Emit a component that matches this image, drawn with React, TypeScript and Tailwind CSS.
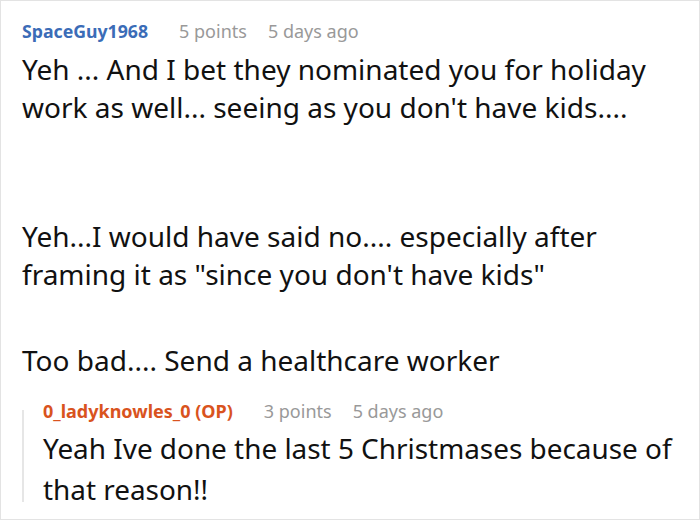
export default function App() {
    return (
        <div className="w-[700px] h-[520px] bg-white border border-[#e3e3e3] overflow-hidden" style={{ fontFamily: '"Noto Sans", sans-serif' }}>
            <div className="pl-[21px] pt-[17px]">
                <div className="flex items-center text-[18px] leading-[26px]">
                    <span className="font-bold text-[#3b6cb7] text-[17.7px]">SpaceGuy1968</span>
                    <span className="ml-[31px] text-[#999999]">5 points</span>
                    <span className="ml-[21px] text-[#999999]">5 days ago</span>
                </div>
                <div className="text-[28px] leading-[38px] text-[#111111] mt-[6px]">
                    <p>Yeh ... And I bet they nominated you for holiday<br />work as well... seeing as you don't have kids....</p>
                    <p className="mt-[91px]">Yeh...I would have said no.... especially after<br />framing it as "since you don't have kids"</p>
                    <p className="mt-[48px]">Too bad.... Send a healthcare worker</p>
                </div>
                <div className="mt-[19px] flex">
                    <div className="w-[2px] bg-[#e6e6e6] mt-[12px] mb-[8px]" />
                    <div className="pl-[19px]">
                        <div className="flex items-center text-[18px] leading-[26px]">
                            <span className="font-bold text-[#d9531e]">0_ladyknowles_0 (OP)</span>
                            <span className="ml-[31px] text-[#999999]">3 points</span>
                            <span className="ml-[21px] text-[#999999]">5 days ago</span>
                        </div>
                        <p className="text-[27.9px] leading-[41px] text-[#111111] mt-[4px]">Yeah Ive done the last 5 Christmases because of<br />that reason!!</p>
                    </div>
                </div>
            </div>
        </div>
    );
}
